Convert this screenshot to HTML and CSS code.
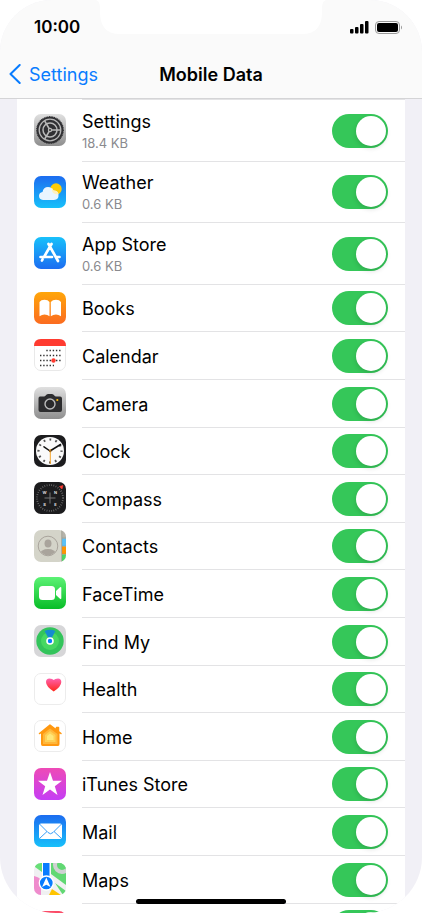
FILE: index.html
```html
<!DOCTYPE html>
<html lang="en">
<head>
  <meta charset="UTF-8">
  <title>Mobile Data</title>
  <meta name="viewport" content="width=device-width, initial-scale=1.0">
  <link rel="stylesheet" href="styles.css">
</head>
<body>
  <div class="phone">
    <header class="top">
      <div class="notch">
        <svg viewBox="0 0 230 34" width="230" height="34"><path d="M0 0Q4 1 4 8V12Q4 34 24 34H206Q226 34 226 12V8Q226 1 230 0Z" fill="#fff"/></svg>
      </div>
      <div class="status">
        <span class="time">10:00</span>
        <div class="status-icons">
          <svg width="19" height="13" viewBox="0 0 19 13"><rect x="0" y="8" width="3.500" height="4.500" rx="1"/><rect x="5" y="6" width="3.500" height="6.500" rx="1"/><rect x="10" y="3" width="3.500" height="9.500" rx="1"/><rect x="15" y="0" width="3.500" height="12.500" rx="1"/></svg>
          <svg width="27" height="13" viewBox="0 0 27 13"><rect x=".5" y=".5" width="24" height="12" rx="3.500" fill="none" stroke="#999"/><rect x="2" y="2" width="21" height="9" rx="2"/><path d="M26 4.500Q27 5 27 6.500T26 8.500Z" fill="#999"/></svg>
        </div>
      </div>
      <nav class="nav">
        <a href="#" class="back">
          <svg width="12" height="20" viewBox="0 0 12 20"><path d="M10.700 1L1.500 10L10.700 19" fill="none" stroke="#087cff" stroke-width="2" stroke-linecap="round" stroke-linejoin="round"/></svg>
          Settings
        </a>
        <h1>Mobile Data</h1>
      </nav>
    </header>

    <main class="list">
      <div class="row">
        <svg class="icon" viewBox="0 0 32 32">
          <defs><linearGradient id="grey" x2="0" y2="1"><stop stop-color="#e0e0e0"/><stop offset="1" stop-color="#8e8e8e"/></linearGradient></defs>
          <rect width="32" height="32" rx="7" fill="url(#grey)"/>
          <circle cx="16" cy="16" r="13.300" fill="#303033" stroke="#303033" stroke-width="1.200" stroke-dasharray="1 .7"/>
          <circle cx="16" cy="16" r="10.800" fill="none" stroke="#b9b9b9" stroke-width="1.300"/>
          <circle cx="16" cy="16" r="7" fill="none" stroke="#b9b9b9" stroke-width="1.500"/>
          <path d="M16 16H26.500M16 16L10.700 7M16 16L10.700 25" stroke="#b9b9b9" stroke-width="1.500"/>
          <circle cx="16" cy="16" r="2.200" fill="#b9b9b9"/><circle cx="16" cy="16" r="1" fill="#333"/>
        </svg>
        <div class="cell">
          <label for="settings">Settings<small>18.4 KB</small></label>
          <input type="checkbox" class="switch" id="settings" checked>
        </div>
      </div>
      <div class="row">
        <svg class="icon" viewBox="0 0 32 32">
          <defs><linearGradient id="sky" x2="0" y2="1"><stop stop-color="#1c6cf0"/><stop offset="1" stop-color="#17c0fa"/></linearGradient></defs>
          <rect width="32" height="32" rx="7" fill="url(#sky)"/>
          <circle cx="22" cy="13" r="5.700" fill="#ffcc08"/>
          <path d="M9 24Q5 23.500 5 20Q5 16.500 8.500 16Q9.500 11 14 11Q18 11 19.500 14.500Q24 14.500 24.500 18.500Q25 23.500 20 24Z" fill="#e9f5ff"/>
          <path d="M18 12Q19 13 19.500 14.500Q24 14.500 24.500 18Q20 19 18 15Z" fill="#fff0bd"/>
        </svg>
        <div class="cell">
          <label for="weather">Weather<small>0.6 KB</small></label>
          <input type="checkbox" class="switch" id="weather" checked>
        </div>
      </div>
      <div class="row">
        <svg class="icon" viewBox="0 0 32 32">
          <defs><linearGradient id="store" x2="0" y2="1"><stop stop-color="#18c1fb"/><stop offset="1" stop-color="#1c6df1"/></linearGradient></defs>
          <rect width="32" height="32" rx="7" fill="url(#store)"/>
          <path d="M17.500 7L10 20M14.500 7L24 24M6.500 20H18M22 20H25.500M8.500 22.500L8 23.500" fill="none" stroke="#fff" stroke-width="2.700" stroke-linecap="round"/>
        </svg>
        <div class="cell">
          <label for="app-store">App Store<small>0.6 KB</small></label>
          <input type="checkbox" class="switch" id="app-store" checked>
        </div>
      </div>
      <div class="row">
        <svg class="icon" viewBox="0 0 32 32">
          <defs><linearGradient id="books-bg" x2="0" y2="1"><stop stop-color="#ffa60a"/><stop offset="1" stop-color="#fb6b20"/></linearGradient></defs>
          <rect width="32" height="32" rx="7" fill="url(#books-bg)"/>
          <path d="M15.500 10Q14 7.800 10.500 7.800Q7 7.800 5.500 10V24.300Q8 22.600 10.500 22.600Q13.500 22.600 15.500 24.300ZM16.800 10Q18.500 7.800 22 7.800Q25.500 7.800 27 10V24.300Q24.500 22.600 22 22.600Q19 22.600 16.800 24.300Z" fill="#fff"/>
        </svg>
        <div class="cell">
          <label for="books">Books</label>
          <input type="checkbox" class="switch" id="books" checked>
        </div>
      </div>
      <div class="row">
        <svg class="icon" viewBox="0 0 32 32">
          <rect x=".5" y=".5" width="31" height="31" rx="6.500" fill="#fff" stroke="#e9e9e9"/>
          <path d="M0 7Q0 0 7 0H25Q32 0 32 7Z" fill="#ff3b30"/>
          <path d="M12.300 11.500H27M6 16.500H27M6 21.500H27M6 26.500H20" stroke="#333" stroke-width="1.400" stroke-dasharray="1.400 1.800"/>
          <circle cx="19.500" cy="21.500" r="2.200" fill="#ff3b30"/>
        </svg>
        <div class="cell">
          <label for="calendar">Calendar</label>
          <input type="checkbox" class="switch" id="calendar" checked>
        </div>
      </div>
      <div class="row">
        <svg class="icon" viewBox="0 0 32 32">
          <rect width="32" height="32" rx="7" fill="url(#grey)"/>
          <path d="M6 9.500H10Q11 9.500 11.700 8.500Q12.500 7 14 7H18Q19.500 7 20.300 8.500Q21 9.500 22 9.500H26Q28 9.500 28 11.500V23Q28 25 26 25H6.500Q4.500 25 4.500 23V11.500Q4.500 9.500 6 9.500Z" fill="#2c2c2e"/>
          <circle cx="16" cy="17" r="5" fill="#29292b" stroke="#bbb" stroke-width="1.400"/>
          <circle cx="23.300" cy="13" r="1.100" fill="#ffbe0b"/>
        </svg>
        <div class="cell">
          <label for="camera">Camera</label>
          <input type="checkbox" class="switch" id="camera" checked>
        </div>
      </div>
      <div class="row">
        <svg class="icon" viewBox="0 0 32 32">
          <rect width="32" height="32" rx="7" fill="#1c1c1e"/>
          <circle cx="16" cy="16" r="14" fill="#fafafa"/>
          <circle cx="16" cy="16" r="11.500" fill="none" stroke="#555" stroke-width="2.200" stroke-dasharray="1.800 4.220" stroke-dashoffset=".9"/>
          <path d="M16 16L10 11.800M16 16L26.500 9.500" stroke="#111" stroke-width="1.500" stroke-linecap="round"/>
          <path d="M16.300 14V29" stroke="#f7a52a" stroke-width="1"/>
          <circle cx="16.200" cy="16" r="1.300" fill="#a87023"/>
        </svg>
        <div class="cell">
          <label for="clock">Clock</label>
          <input type="checkbox" class="switch" id="clock" checked>
        </div>
      </div>
      <div class="row">
        <svg class="icon" viewBox="0 0 32 32">
          <rect width="32" height="32" rx="7" fill="#1c1c1e"/>
          <circle cx="16" cy="16" r="13" fill="none" stroke="#777" stroke-width="1.800" stroke-dasharray=".7 1.600"/>
          <path d="M16 10.500V21.500M10.500 16H21.500" stroke="#777" stroke-width="1"/>
          <g fill="#ddd" font-family="Inter, sans-serif" font-size="4" font-weight="700" text-anchor="middle"><text x="10.500" y="11.500">W</text><text x="21.500" y="11.500">N</text><text x="10.500" y="23.500">S</text><text x="21.500" y="23.500">E</text></g>
          <path d="M25.500 4.500L29 3.500L28 7Z" fill="#ff3b30" stroke="#ff3b30" stroke-width=".6"/>
        </svg>
        <div class="cell">
          <label for="compass">Compass</label>
          <input type="checkbox" class="switch" id="compass" checked>
        </div>
      </div>
      <div class="row">
        <svg class="icon" viewBox="0 0 32 32">
          <defs>
            <clipPath id="tile"><rect width="32" height="32" rx="7"/></clipPath>
            <clipPath id="face"><circle cx="14" cy="16" r="9.300"/></clipPath>
          </defs>
          <g clip-path="url(#tile)">
            <rect width="32" height="32" fill="#d4d4c9"/>
            <path d="M28 0H32V8H28Z" fill="#b5b3aa"/><path d="M28 8.500H32V16H28Z" fill="#5ac1f8"/><path d="M28 16.500H32V24H28Z" fill="#ff9500"/><path d="M28 24.500H32V32H28Z" fill="#4cd964"/>
            <path d="M27.700 0V32M28 8.200H32M28 16.200H32M28 24.200H32" stroke="#88887e" stroke-width=".6"/>
          </g>
          <circle cx="14" cy="16" r="9.800" fill="none" stroke="#a9a49c"/>
          <g clip-path="url(#face)" fill="#a9a49c"><ellipse cx="14" cy="13.500" rx="3.500" ry="4"/><ellipse cx="14" cy="24" rx="8" ry="5"/></g>
        </svg>
        <div class="cell">
          <label for="contacts">Contacts</label>
          <input type="checkbox" class="switch" id="contacts" checked>
        </div>
      </div>
      <div class="row">
        <svg class="icon" viewBox="0 0 32 32">
          <defs><linearGradient id="green" x2="0" y2="1"><stop stop-color="#5cf275"/><stop offset="1" stop-color="#08bd27"/></linearGradient></defs>
          <rect width="32" height="32" rx="7" fill="url(#green)"/>
          <rect x="5" y="9" width="16" height="14" rx="3.500" fill="#fff"/>
          <path d="M22 14L26 10.300Q27.300 9.500 27.300 11V21Q27.300 22.500 26 21.700L22 18Z" fill="#fff"/>
        </svg>
        <div class="cell">
          <label for="facetime">FaceTime</label>
          <input type="checkbox" class="switch" id="facetime" checked>
        </div>
      </div>
      <div class="row">
        <svg class="icon" viewBox="0 0 32 32">
          <rect width="32" height="32" rx="7" fill="#d6d6d8"/>
          <circle cx="16" cy="16" r="13.700" fill="#33c45b"/>
          <circle cx="16" cy="16" r="9" fill="#46d862"/>
          <path d="M16 16L10.500 6Q16 3.500 21.500 6Z" fill="#168bd0"/>
          <circle cx="16" cy="16" r="3" fill="#087cff" stroke="#fff" stroke-width="1.600"/>
        </svg>
        <div class="cell">
          <label for="find-my">Find My</label>
          <input type="checkbox" class="switch" id="find-my" checked>
        </div>
      </div>
      <div class="row">
        <svg class="icon" viewBox="0 0 32 32">
          <defs><linearGradient id="pink" x2="0" y2="1"><stop stop-color="#ff61ad"/><stop offset="1" stop-color="#ff2719"/></linearGradient></defs>
          <rect x=".5" y=".5" width="31" height="31" rx="6.500" fill="#fff" stroke="#ececec"/>
          <path d="M19.700 18.500Q12 13.500 12 9Q12 5.500 15.500 5.500Q18.500 5.500 19.700 7Q21 5.500 24 5.500Q27.300 5.500 27.300 9Q27.300 13.500 19.700 18.500Z" fill="url(#pink)"/>
        </svg>
        <div class="cell">
          <label for="health">Health</label>
          <input type="checkbox" class="switch" id="health" checked>
        </div>
      </div>
      <div class="row">
        <svg class="icon" viewBox="0 0 32 32">
          <rect x=".5" y=".5" width="31" height="31" rx="6.500" fill="#fff" stroke="#ececec"/>
          <path d="M5.500 13.500L16 5L22.500 10V7.500H24.500V11.500L27 13.500" fill="#ff9810" stroke="#ff9810" stroke-width="1.500" stroke-linejoin="round" stroke-linecap="round"/>
          <path d="M7 13L16 5.500L25.500 13V24Q25.500 26 24 26H8.500Q7 26 7 24Z" fill="#ff9810"/>
          <path d="M9 14L16 8.500L23.500 14V24H9Z" fill="#ffb63a"/>
          <path d="M11 15L16 11L21.500 15V22H11Z" fill="#ffd055"/>
          <path d="M13 16L16 13.500L19.500 16V20H13Z" fill="#ffe779"/>
        </svg>
        <div class="cell">
          <label for="home">Home</label>
          <input type="checkbox" class="switch" id="home" checked>
        </div>
      </div>
      <div class="row">
        <svg class="icon" viewBox="0 0 32 32">
          <defs><linearGradient id="purple" x2="0" y2="1"><stop stop-color="#ee4ab6"/><stop offset="1" stop-color="#c53df5"/></linearGradient></defs>
          <rect width="32" height="32" rx="7" fill="url(#purple)"/>
          <path d="M16 4L19 12.800H28L20.800 18.200L23.500 27L16 21.500L8.500 27L11.200 18.200L4 12.800H13Z" fill="#fff"/>
        </svg>
        <div class="cell">
          <label for="itunes">iTunes Store</label>
          <input type="checkbox" class="switch" id="itunes" checked>
        </div>
      </div>
      <div class="row">
        <svg class="icon" viewBox="0 0 32 32">
          <rect width="32" height="32" rx="7" fill="url(#sky)"/>
          <rect x="5" y="8.500" width="23" height="15.500" rx="2" fill="#fff"/>
          <path d="M5.500 9L14 17.500Q16.500 20 19 17.500L27.500 9M5.500 23.500L13 16.500M27.500 23.500L20 16.500" fill="none" stroke="#2494f6" stroke-width=".9"/>
        </svg>
        <div class="cell">
          <label for="mail">Mail</label>
          <input type="checkbox" class="switch" id="mail" checked>
        </div>
      </div>
      <div class="row">
        <svg class="icon" viewBox="0 0 32 32">
          <g clip-path="url(#tile)">
            <rect width="32" height="32" fill="#f0f0f2"/>
            <path d="M0 0H8V9L1 4Z" fill="#68df78"/>
            <path d="M17 0H32V22L17 11Z" fill="#61d873"/>
            <circle cx="28" cy="2" r="7" fill="#61d873" stroke="#cfd1d2" stroke-width="4"/>
            <path d="M0 13Q5 14 7 17V32H0Z" fill="#ef8ccd"/>
            <path d="M18 26L27 32H15Z" fill="#ffc400"/>
            <path d="M21 20L32 28V32H29Z" fill="#61d873"/>
            <path d="M8.500 0V14M16 0V14" stroke="#fff" stroke-width="1"/>
            <path d="M9 0H15.500V15H9Z" fill="#087cff"/>
          </g>
          <circle cx="12.300" cy="20" r="7" fill="#087cff" stroke="#fff" stroke-width="1.300"/>
          <path d="M12.300 14.500L16.500 24L12.300 21.800L8.100 24Z" fill="#fff"/>
        </svg>
        <div class="cell">
          <label for="maps">Maps</label>
          <input type="checkbox" class="switch" id="maps" checked>
        </div>
      </div>
      <div class="row">
        <svg class="icon" viewBox="0 0 32 32"><rect width="32" height="32" rx="7" fill="#fb4b67"/></svg>
        <div class="cell last">
          <input type="checkbox" class="switch" aria-label="Music" checked>
        </div>
      </div>
    </main>
    <div class="home-bar"></div>
  </div>
</body>
</html>
```
FILE: styles.css
```css
* {
  box-sizing: border-box;
}
body {
  margin: 0;
  background: #fff;
  font-family: Inter, "Liberation Sans", sans-serif;
  color: #000;
}
svg {
  display: block;
}
.phone {
  position: relative;
  height: 100vh;
  overflow: hidden;
  border-radius: 52px 52px 56px 56px;
  background: #f1f0f6;
}

/* status bar and title */
.top {
  position: relative;
  background: #fafafa;
  border-bottom: 1px solid #d4d4d6;
}
.notch {
  position: absolute;
  top: 0;
  left: 0;
  right: 0;
  display: flex;
  justify-content: center;
}
.status {
  display: flex;
  justify-content: space-between;
  align-items: center;
  height: 52px;
  padding: 2px 20px 0 34px;
}
.time {
  font-size: 17px;
  font-weight: 600;
}
.status-icons {
  display: flex;
  gap: 6px;
}
.nav {
  display: grid;
  grid-template-columns: 1fr auto 1fr;
  align-items: center;
  height: 46px;
  padding: 0 9px 2px;
}
.back {
  display: flex;
  align-items: center;
  gap: 8px;
  font-size: 18px;
  color: #087cff;
  text-decoration: none;
}
h1 {
  margin: 0;
  font-size: 18px;
  font-weight: 600;
}

/* app list */
.list {
  display: grid;
  grid-template-rows: 62px 61px 62px;
  grid-auto-rows: 47px 48px 48px 47px 48px;
  margin: 0 17px;
  background: #fff;
}
.row {
  display: flex;
  align-items: center;
  gap: 16px;
  padding-left: 17px;
}
.icon {
  width: 32px;
  height: 32px;
}
.cell {
  flex: 1;
  align-self: stretch;
  display: flex;
  justify-content: space-between;
  align-items: center;
  padding-right: 17px;
  border-top: 1px solid #e3e3e5;
}
.last {
  justify-content: flex-end;
}
label {
  padding-top: 2px;
  font-size: 18px;
  line-height: 24px;
}
small {
  display: block;
  margin-bottom: 2px;
  font-size: 13px;
  line-height: 18px;
  color: #8a8a8e;
}
.switch {
  appearance: none;
  display: flex;
  align-items: center;
  width: 56px;
  height: 34px;
  margin: 0;
  padding: 2px;
  border-radius: 17px;
  background: #e9e9ea;
}
.switch::before {
  content: "";
  width: 30px;
  height: 30px;
  border-radius: 50%;
  background: #fff;
  box-shadow: 0 2px 5px rgba(0, 0, 0, 0.15);
}
.switch:checked {
  justify-content: flex-end;
  background: #35c759;
}
.home-bar {
  position: absolute;
  bottom: 9px;
  left: 50%;
  width: 150px;
  height: 5px;
  margin-left: -75px;
  border-radius: 3px;
  background: #000;
}
```
